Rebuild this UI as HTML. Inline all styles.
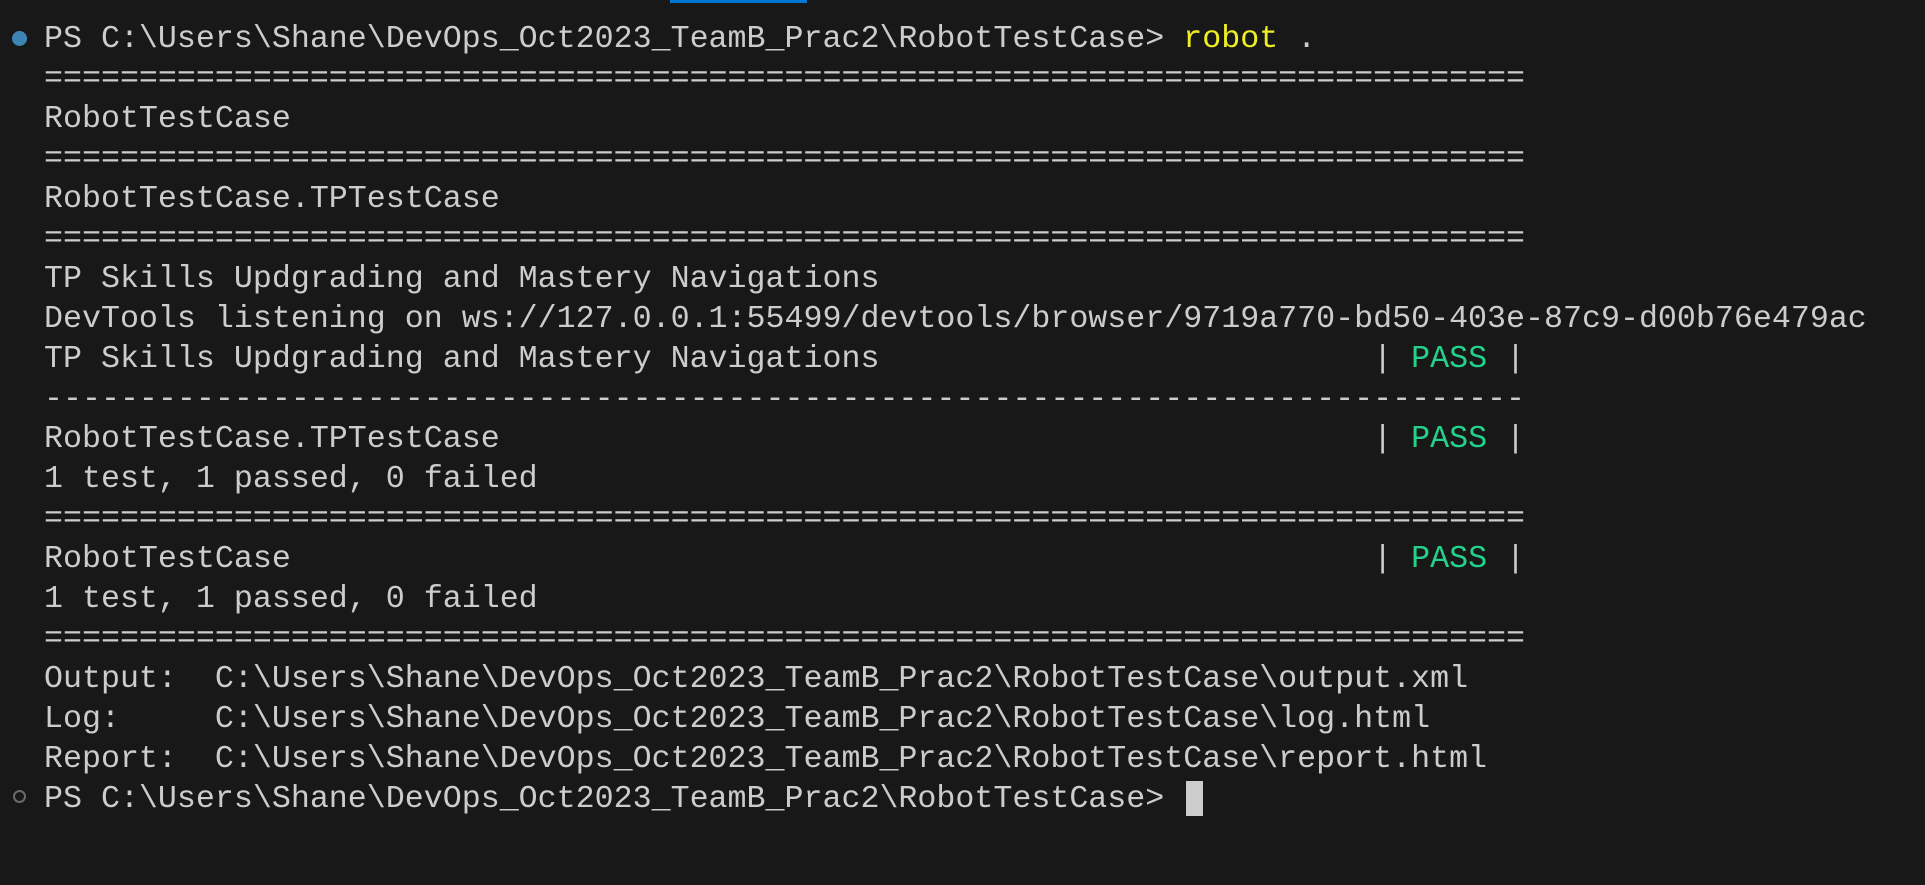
<!DOCTYPE html>
<html><head><meta charset="utf-8"><style>
html,body{margin:0;padding:0;background:#181818;width:1925px;height:885px;overflow:hidden}
pre{position:absolute;left:44px;top:19px;margin:0;font-family:"Liberation Mono",monospace;font-size:31.65px;line-height:40px;color:#cccccc;white-space:pre}
.y{color:#eeee22}.g{color:#23d18b}
.dot{position:absolute;left:12px;top:31px;width:15px;height:15px;border-radius:50%;background:#3d85b4}
.odot{position:absolute;left:13px;top:790px;width:9px;height:9px;border-radius:50%;border:2px solid #6b6b6b}
.cur{position:absolute;left:1186px;top:781px;width:17px;height:35px;background:#cccccc}
.bar{position:absolute;left:670px;top:0;width:137px;height:3px;background:#0078d4}
</style></head><body>
<div class="bar"></div>
<div class="dot"></div>
<div class="odot"></div>
<div class="cur"></div>
<pre>PS C:\Users\Shane\DevOps_Oct2023_TeamB_Prac2\RobotTestCase&gt; <span class="y">robot</span> .
==============================================================================
RobotTestCase
==============================================================================
RobotTestCase.TPTestCase
==============================================================================
TP Skills Updgrading and Mastery Navigations
DevTools listening on ws://127.0.0.1:55499/devtools/browser/9719a770-bd50-403e-87c9-d00b76e479ac
TP Skills Updgrading and Mastery Navigations                          | <span class="g">PASS</span> |
------------------------------------------------------------------------------
RobotTestCase.TPTestCase                                              | <span class="g">PASS</span> |
1 test, 1 passed, 0 failed
==============================================================================
RobotTestCase                                                         | <span class="g">PASS</span> |
1 test, 1 passed, 0 failed
==============================================================================
Output:  C:\Users\Shane\DevOps_Oct2023_TeamB_Prac2\RobotTestCase\output.xml
Log:     C:\Users\Shane\DevOps_Oct2023_TeamB_Prac2\RobotTestCase\log.html
Report:  C:\Users\Shane\DevOps_Oct2023_TeamB_Prac2\RobotTestCase\report.html
PS C:\Users\Shane\DevOps_Oct2023_TeamB_Prac2\RobotTestCase&gt; </pre>
</body></html>
